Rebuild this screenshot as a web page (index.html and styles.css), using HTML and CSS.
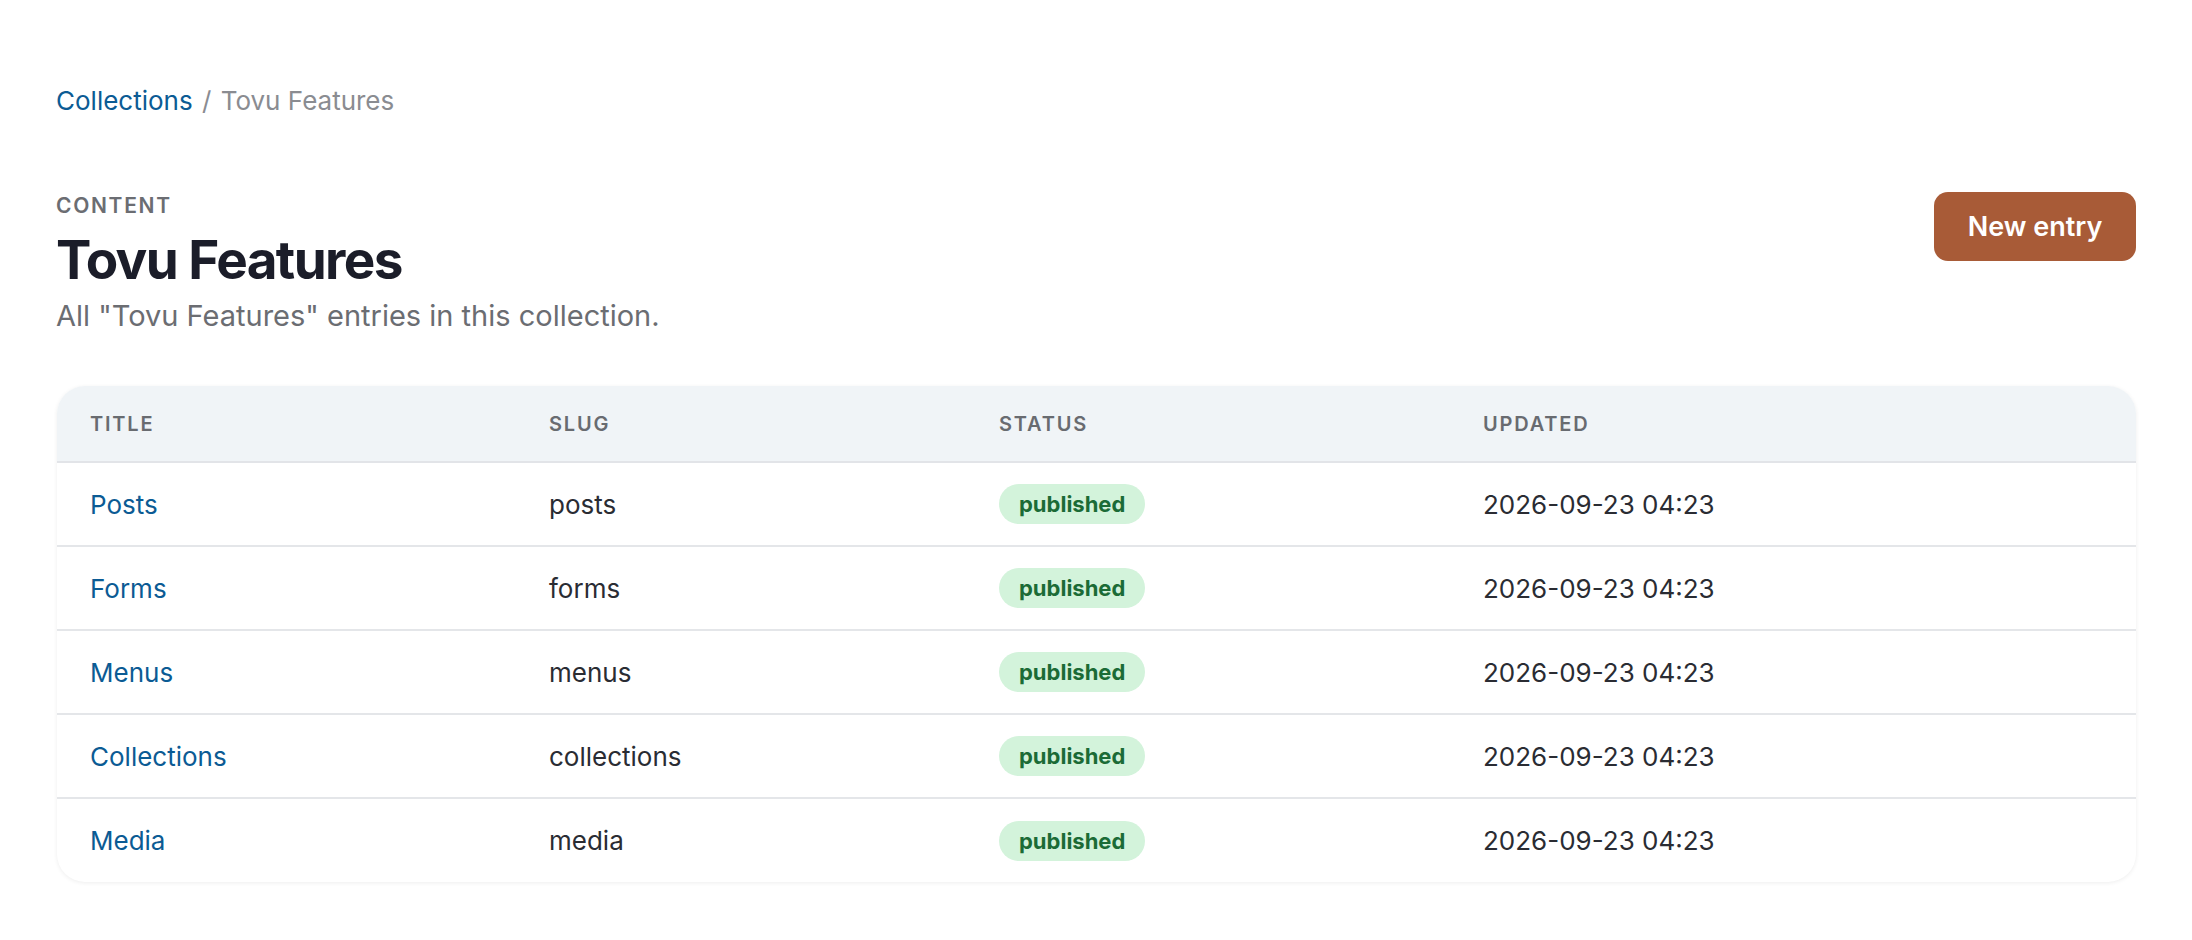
FILE: index.html
```html
<!DOCTYPE html>
<html lang="en">

<head>
    <meta charset="UTF-8">
    <meta name="viewport" content="width=device-width, initial-scale=1.0">
    <title>Tovu Features</title>
    <link rel="stylesheet" href="styles.css">
</head>

<body>
    <div class="page">
        <nav class="breadcrumb">
            <a href="#">Collections</a>
            <span class="sep">/</span>
            <span class="current">Tovu Features</span>
        </nav>

        <header class="page-header">
            <div class="heading">
                <div class="eyebrow">CONTENT</div>
                <h1>Tovu Features</h1>
                <p class="lead">All "Tovu Features" entries in this collection.</p>
            </div>
            <button class="btn-primary">New entry</button>
        </header>

        <div class="table-card">
            <table class="entries">
                <thead>
                    <tr>
                        <th class="col-title">Title</th>
                        <th class="col-slug">Slug</th>
                        <th class="col-status">Status</th>
                        <th>Updated</th>
                    </tr>
                </thead>
                <tbody>
                    <tr>
                        <td><a href="#">Posts</a></td>
                        <td>posts</td>
                        <td><span class="badge">published</span></td>
                        <td>2026-09-23 04:23</td>
                    </tr>
                    <tr>
                        <td><a href="#">Forms</a></td>
                        <td>forms</td>
                        <td><span class="badge">published</span></td>
                        <td>2026-09-23 04:23</td>
                    </tr>
                    <tr>
                        <td><a href="#">Menus</a></td>
                        <td>menus</td>
                        <td><span class="badge">published</span></td>
                        <td>2026-09-23 04:23</td>
                    </tr>
                    <tr>
                        <td><a href="#">Collections</a></td>
                        <td>collections</td>
                        <td><span class="badge">published</span></td>
                        <td>2026-09-23 04:23</td>
                    </tr>
                    <tr>
                        <td><a href="#">Media</a></td>
                        <td>media</td>
                        <td><span class="badge">published</span></td>
                        <td>2026-09-23 04:23</td>
                    </tr>
                </tbody>
            </table>
        </div>
    </div>
</body>

</html>
```

FILE: styles.css
```css
* {
    margin: 0;
    padding: 0;
    box-sizing: border-box;
}

html,
body {
    background-color: #fff;
    font-family: Inter, "Noto Sans", sans-serif;
    color: #2a2c33;
}

a {
    color: #0b5b94;
    text-decoration: none;
}

.page {
    padding: 84px 56px 56px;
}

.breadcrumb {
    font-size: 26px;
    line-height: 34px;
    color: #8a8c91;
}

.breadcrumb .sep {
    margin: 0 2px;
}

.page-header {
    display: flex;
    justify-content: space-between;
    align-items: flex-start;
    margin-top: 74px;
}

.eyebrow {
    font-size: 21px;
    line-height: 28px;
    font-weight: 600;
    letter-spacing: .08em;
    color: #6b6d72;
}

.heading h1 {
    margin-top: 9px;
    font-size: 53px;
    line-height: 62px;
    font-weight: 700;
    letter-spacing: -.03em;
    color: #1b1d29;
}

.lead {
    margin-top: 7px;
    font-size: 29px;
    line-height: 36px;
    color: #6b6d72;
}

.btn-primary {
    width: 202px;
    height: 69px;
    border: none;
    border-radius: 14px;
    background-color: #a85b37;
    color: #fff;
    font-family: inherit;
    font-size: 27px;
    font-weight: 600;
    cursor: pointer;
}

.table-card {
    margin: 52px 0 0 1px;
    border-radius: 28px;
    overflow: hidden;
    background-color: #fff;
    box-shadow: 0 1px 4px rgba(0, 0, 0, .07);
}

.entries {
    width: 100%;
    border-collapse: collapse;
}

.entries th {
    height: 76px;
    padding: 0 33px;
    text-align: left;
    background-color: #f0f4f7;
    border-bottom: 2px solid #e2e4e8;
    font-size: 20px;
    font-weight: 600;
    letter-spacing: .09em;
    text-transform: uppercase;
    color: #686b70;
}

.entries .col-title {
    width: 459px;
}

.entries .col-slug {
    width: 450px;
}

.entries .col-status {
    width: 484px;
}

.entries td {
    height: 84px;
    padding: 0 33px;
    font-size: 26px;
    color: #2a2c33;
    border-bottom: 2px solid #e4e6e9;
}

.entries tbody tr:last-child td {
    border-bottom: none;
}

.badge {
    display: inline-block;
    height: 40px;
    line-height: 40px;
    padding: 0 20px;
    border-radius: 20px;
    background-color: #d3f3db;
    color: #1b6b36;
    font-size: 22px;
    font-weight: 700;
    vertical-align: middle;
}
```
